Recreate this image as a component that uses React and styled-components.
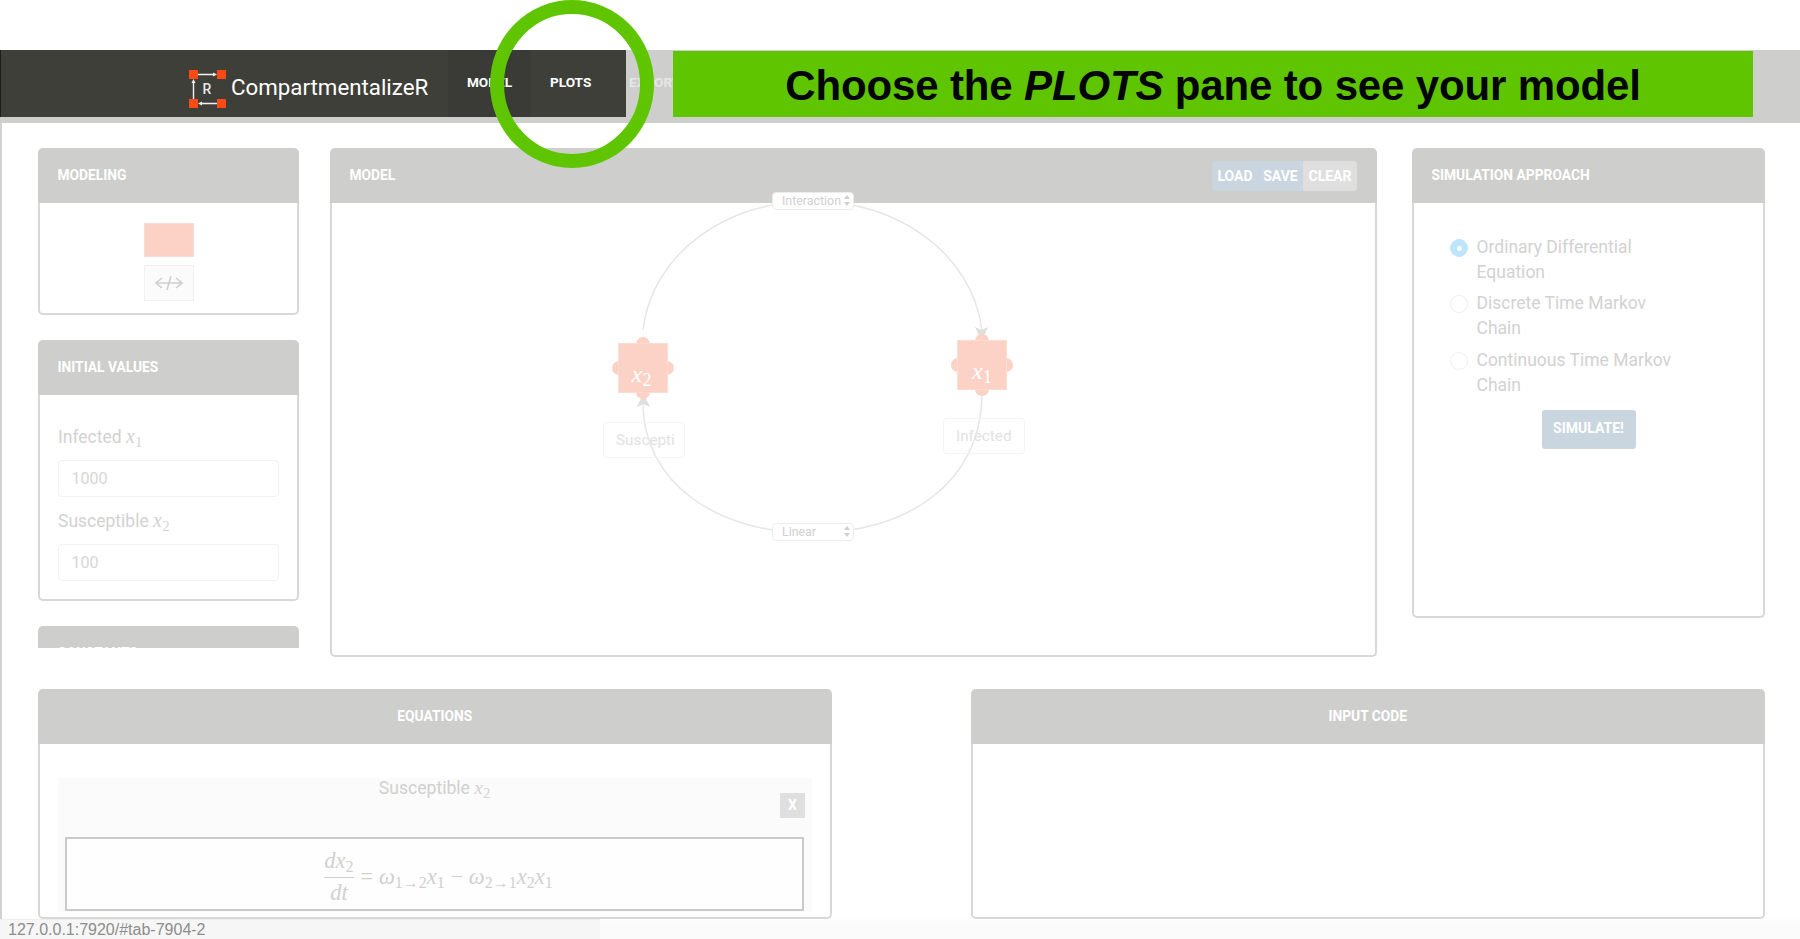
import React from "react";
import styled, { createGlobalStyle } from "styled-components";

const Global = createGlobalStyle`
  html, body { margin: 0; padding: 0; height: 100%; overflow: hidden; background: #fff; }
  body { font-family: Roboto, "Liberation Sans", sans-serif; }
  * { box-sizing: border-box; }
`;

const Page = styled.div`
  position: relative;
  width: 1800px;
  height: 939px;
  overflow: hidden;
  padding-top: 50px;
  background: linear-gradient(#fff 0, #fff 915px, #fbfbfb 925px);
`;

const NavBar = styled.header`
  display: flex;
  height: 73px;
  padding-bottom: 6px;
  background: #cececc;
`;

const Brand = styled.div`
  width: 448px;
  display: flex;
  align-items: center;
  gap: 4px;
  padding-left: 188px;
  background: #3f3f3a;
  border-left: 1px solid #1c1c1a;
`;

const BrandName = styled.span`
  color: #fff;
  font-size: 22.3px;
  line-height: 1;
  margin-top: 8px;
`;

const LogoMark = styled.svg`
  margin-top: 10px;
`;

const NavItem = styled.div`
  display: flex;
  align-items: center;
  justify-content: ${(p) => p.$justify || "flex-start"};
  width: ${(p) => p.$w}px;
  padding: ${(p) => p.$pad};
  padding-bottom: 4px;
  background: ${(p) => p.$bg};
  color: ${(p) => p.$color || "#fff"};
  font-size: 13.6px;
  font-weight: 700;
`;

const Banner = styled.div`
  position: absolute;
  left: 673px;
  top: 51px;
  width: 1080px;
  height: 66px;
  display: flex;
  align-items: center;
  justify-content: center;
  background: #5fc500;
  color: #050505;
  font-family: "Liberation Sans", Arial, sans-serif;
  font-weight: 700;
  font-size: 42px;
  letter-spacing: -0.15px;
  white-space: pre;
  padding-top: 4px;
`;

const Halo = styled.svg`
  position: absolute;
  left: 488px;
  top: 0;
  z-index: 5;
`;

const Main = styled.main`
  border-left: 2px solid #d2d2d0;
  padding: 25px 35px 0 36px;
  height: 816px;
`;

const TopRow = styled.div`
  display: flex;
  align-items: flex-start;
`;

const LeftColumn = styled.div`
  width: 261px;
  height: 500px;
  overflow: hidden;
  display: flex;
  flex-direction: column;
  gap: 25px;
  flex-shrink: 0;
`;

const Panel = styled.section`
  display: flex;
  flex-direction: column;
  flex-shrink: 0;
  width: ${(p) => p.$w}px;
  height: ${(p) => p.$h}px;
  margin-left: ${(p) => p.$ml || 0}px;
`;

const PanelHead = styled.div`
  height: 55px;
  flex-shrink: 0;
  display: flex;
  align-items: center;
  justify-content: ${(p) => (p.$center ? "center" : "space-between")};
  padding: 0 20px 2px 19.5px;
  background: #cececc;
  border-radius: 5px 5px 0 0;
  color: #fff;
  font-size: 13.8px;
  font-weight: 700;
`;

const PanelBody = styled.div`
  position: relative;
  flex: 1;
  min-height: 0;
  border: 2px solid #d8d8d6;
  border-top: none;
  border-radius: 0 0 5px 5px;
  padding: ${(p) => p.$pad || "0"};
  display: flex;
  flex-direction: column;
  overflow: ${(p) => (p.$clip ? "hidden" : "visible")};
`;

const Swatch = styled.div`
  width: 50px;
  height: 34px;
  background: #fdd2c6;
  border: 1px solid #fbdcd3;
  align-self: center;
  margin-top: 20px;
`;

const ArrowTool = styled.div`
  width: 50px;
  height: 36px;
  margin-top: 8px;
  align-self: center;
  background: #fbfbfb;
  border: 1px solid #f1f1f1;
  display: flex;
  align-items: center;
  justify-content: center;
`;

const FieldLabel = styled.div`
  height: 25px;
  color: #d2d2d2;
  font-size: 17.5px;
  line-height: 25px;
  margin-bottom: 11px;
  white-space: nowrap;
`;

const Mi = styled.i`
  font-family: "Liberation Serif", serif;
  font-size: ${(p) => p.$size || 20}px;
  color: ${(p) => p.$color || "inherit"};
  letter-spacing: 0.5px;
`;

const Sub = styled.sub`
  font-family: "Liberation Serif", serif;
  font-size: ${(p) => p.$size || 14}px;
  line-height: 0;
  vertical-align: -4px;
`;

const NumberInput = styled.input`
  display: block;
  width: 100%;
  height: 37px;
  margin-bottom: 11px;
  padding: 0 12.5px;
  border: 1px solid #f2f2f2;
  border-radius: 4px;
  background: #fff;
  color: #d6d6d6;
  font-family: Roboto, sans-serif;
  font-size: 16px;
  outline: none;
`;

const ButtonGroup = styled.div`
  display: flex;
  height: 30px;
  margin-top: 3px;
  border-radius: 4px;
  overflow: hidden;
`;

const HeadButton = styled.div`
  width: ${(p) => p.$w}px;
  display: flex;
  align-items: center;
  justify-content: center;
  background: ${(p) => p.$bg};
  color: #fff;
  font-size: 14px;
  font-weight: 700;
`;

const Canvas = styled.div`
  position: relative;
  flex: 1;
`;

const Wires = styled.svg`
  position: absolute;
  left: 0;
  top: 0;
  overflow: visible;
`;

const RateSelect = styled.div`
  position: absolute;
  left: 439.5px;
  top: ${(p) => p.$top}px;
  width: 82px;
  height: 18px;
  display: flex;
  align-items: center;
  justify-content: space-between;
  padding: 0 3px 2px 9.5px;
  background: #fff;
  border: 1px solid #ececec;
  border-radius: 4px;
  color: #d0d0d0;
  font-size: 12.4px;
`;

const Node = styled.div`
  position: absolute;
  left: ${(p) => p.$x}px;
  top: ${(p) => p.$y}px;
  width: 50px;
  height: 50px;
  background: #fdd2c6;
  border: 1px solid #fcdcd3;
  display: flex;
  justify-content: center;
  padding-top: ${(p) => p.$textTop}px;
  padding-right: ${(p) => p.$textRight}px;
  color: #fff;
  line-height: 1;
`;

const Bump = styled.span`
  position: absolute;
  width: 14px;
  height: 14px;
  border-radius: 50%;
  background: #fdd2c6;
  z-index: -1;
  ${(p) => p.$side === "top" && "top: -7px; left: 17px;"}
  ${(p) => p.$side === "bottom" && "bottom: -7px; left: 17px;"}
  ${(p) => p.$side === "left" && "left: -7px; top: 17px;"}
  ${(p) => p.$side === "right" && "right: -7px; top: 17px;"}
`;

const NodeStage = styled.div`
  position: absolute;
  inset: 0;
  z-index: 0;
  isolation: isolate;
`;

const NodeName = styled.div`
  position: absolute;
  left: ${(p) => p.$x}px;
  top: ${(p) => p.$y}px;
  width: 82px;
  height: 36px;
  padding-left: 12px;
  border: 1px solid #f4f4f4;
  border-radius: 4px;
  color: #e2e2e2;
  font-size: 15.3px;
  line-height: 34px;
  overflow: hidden;
  white-space: nowrap;
`;

const RadioGroup = styled.div`
  display: flex;
  flex-direction: column;
  gap: 6.4px;
  padding: 32px 0 0 36px;
`;

const RadioRow = styled.label`
  display: flex;
  gap: 8.5px;
  width: 230px;
  color: #d2d2d2;
  font-size: 17.5px;
  line-height: 25px;
`;

const RadioDot = styled.span`
  flex-shrink: 0;
  width: 18px;
  height: 18px;
  margin-top: 4px;
  border-radius: 50%;
  border: 1px solid ${(p) => (p.$on ? "#bfe5fd" : "#efefef")};
  background: ${(p) => (p.$on ? "#bfe5fd" : "#fff")};
  display: flex;
  align-items: center;
  justify-content: center;
  &::after {
    content: "";
    width: 5px;
    height: 5px;
    border-radius: 50%;
    background: ${(p) => (p.$on ? "#fff" : "transparent")};
  }
`;

const SimulateButton = styled.div`
  align-self: center;
  width: 94px;
  height: 39px;
  margin-top: 12px;
  border-radius: 3px;
  background: #c9d6e0;
  color: #fff;
  font-size: 14px;
  font-weight: 700;
  display: flex;
  align-items: center;
  justify-content: center;
  padding-bottom: 3px;
`;

const BottomRow = styled.div`
  display: flex;
  margin-top: 32px;
`;

const EquationCard = styled.div`
  height: 134px;
  background: #fbfbfb;
  padding: 0 8px 0 7px;
`;

const EquationTitle = styled.div`
  position: relative;
  height: 59px;
  text-align: center;
  color: #d0d0d0;
  font-size: 17.6px;
  line-height: 20px;
`;

const RemoveButton = styled.div`
  position: absolute;
  right: -1px;
  top: 15px;
  width: 25px;
  height: 25px;
  background: #dfdfdf;
  color: #fff;
  font-size: 14px;
  font-weight: 700;
  line-height: 25px;
  text-align: center;
`;

const FormulaBox = styled.div`
  height: 74px;
  padding: 6px 0 0 8px;
  border: 2px solid #cacac8;
  background: #fefefe;
  display: flex;
  align-items: center;
  justify-content: center;
  color: #d0d0d0;
  font-family: "Liberation Serif", serif;
  font-size: 22.5px;
  gap: 7px;
`;

const Fraction = styled.span`
  display: inline-flex;
  flex-direction: column;
  align-items: center;
  line-height: 1;
  i { font-family: "Liberation Serif", serif; }
`;

const FracTop = styled.span`
  padding: 0 0 4px;
  border-bottom: 1.5px solid #d0d0d0;
`;

const FracBottom = styled.span`
  padding-top: 4px;
`;

const StatusBar = styled.div`
  position: fixed;
  left: 0;
  bottom: 0;
  width: 600px;
  height: 20px;
  padding-left: 8px;
  background: #f6f6f6;
  border-top: 1px solid #efefef;
  color: #8d8d8d;
  font-family: "Liberation Sans", Arial, sans-serif;
  font-size: 16px;
  line-height: 19px;
  z-index: 6;
`;

const Logo = () => (
  <LogoMark width="38" height="38" viewBox="0 0 38 38" aria-hidden="true">
    <rect x="0" y="0" width="9" height="9" fill="#fb4a14" />
    <rect x="28" y="0" width="9" height="9" fill="#fb4a14" />
    <rect x="0" y="29" width="9" height="9" fill="#fb4a14" />
    <rect x="28" y="29" width="9" height="9" fill="#fb4a14" />
    <path d="M9 4.5H25M4.5 29V12M28 33.5H12" stroke="#f1f1f1" strokeWidth="1.4" fill="none" />
    <path d="M28 4.5L24 2.5V6.5ZM4.5 9L2.5 13H6.5ZM9 33.5L13 31.5V35.5Z" fill="#f1f1f1" />
    <text x="18" y="23.5" textAnchor="middle" fontFamily="Roboto, sans-serif" fontWeight="500" fontSize="14" fill="#e6e6e6">R</text>
  </LogoMark>
);

const Caret = () => (
  <svg width="6" height="11" viewBox="0 0 6 11" aria-hidden="true">
    <path d="M3 0L6 4H0ZM3 11L0 7H6Z" fill="#cfcfcf" />
  </svg>
);

const Bumps = () => (
  <>
    <Bump $side="top" />
    <Bump $side="bottom" />
    <Bump $side="left" />
    <Bump $side="right" />
  </>
);

export default function App() {
  return (
    <Page>
      <Global />
      <NavBar>
        <Brand>
          <Logo />
          <BrandName>CompartmentalizeR</BrandName>
        </Brand>
        <NavItem $w={83} $justify="center" $pad="0" $bg="#3a3a36">MODEL</NavItem>
        <NavItem $w={95} $pad="0 0 0 19px" $bg="#3f3f3a">PLOTS</NavItem>
        <NavItem $w={47} $pad="0 0 0 3px" $color="#e6e6e6">EXPORT</NavItem>
      </NavBar>
      <Banner>
        Choose the <i>PLOTS</i> pane to see your model
      </Banner>
      <Halo width="168" height="170" viewBox="0 0 168 170" aria-hidden="true">
        <ellipse cx="84" cy="84" rx="75" ry="77" fill="none" stroke="#5fc500" strokeWidth="14" />
      </Halo>
      <Main>
        <TopRow>
          <LeftColumn>
            <Panel $w={261} $h={167}>
              <PanelHead>MODELING</PanelHead>
              <PanelBody>
                <Swatch />
                <ArrowTool>
                  <svg width="28" height="16" viewBox="0 0 28 16" aria-hidden="true">
                    <path d="M1 8H27M7 3L1 8L7 13M21 3L27 8L21 13M16 1L12 15" stroke="#cfcfcf" strokeWidth="1.6" fill="none" />
                  </svg>
                </ArrowTool>
              </PanelBody>
            </Panel>
            <Panel $w={261} $h={261}>
              <PanelHead>INITIAL VALUES</PanelHead>
              <PanelBody $pad="29px 18px 0">
                <FieldLabel>Infected <Mi>x</Mi><Sub>1</Sub></FieldLabel>
                <NumberInput readOnly value="1000" />
                <FieldLabel>Susceptible <Mi>x</Mi><Sub>2</Sub></FieldLabel>
                <NumberInput readOnly value="100" />
              </PanelBody>
            </Panel>
            <Panel $w={261} $h={200}>
              <PanelHead>CONSTANTS</PanelHead>
              <PanelBody />
            </Panel>
          </LeftColumn>

          <Panel $w={1047} $h={509} $ml={31}>
            <PanelHead>
              MODEL
              <ButtonGroup>
                <HeadButton $w={46} $bg="#c9d6e0">LOAD</HeadButton>
                <HeadButton $w={45} $bg="#c9d6e0">SAVE</HeadButton>
                <HeadButton $w={54} $bg="#dfdfdf">CLEAR</HeadButton>
              </ButtonGroup>
            </PanelHead>
            <PanelBody>
              <Canvas>
                <Wires width="1043" height="452" viewBox="0 0 1043 452" aria-hidden="true">
                  <path
                    d="M311 127C320 50 395 -2 480 -2C565 -2 640 50 650 127M650 190C650 280 575 330 480 330C385 330 311 280 311 200"
                    fill="none"
                    stroke="#e6e6e6"
                    strokeWidth="1.5"
                  />
                  <path d="M649.5 138L643 124L649.5 127L656 124Z" fill="#dedede" />
                  <path d="M311.5 190L305 204L311.5 201L318 204Z" fill="#dedede" />
                </Wires>
                <NodeStage>
                  <Node $x={286} $y={140} $textTop={18} $textRight={3}>
                    <Bumps />
                    <span><Mi $size={24}>x</Mi><Sub $size={18}>2</Sub></span>
                  </Node>
                  <Node $x={625} $y={137} $textTop={18} $textRight={0}>
                    <Bumps />
                    <span><Mi $size={24}>x</Mi><Sub $size={18}>1</Sub></span>
                  </Node>
                </NodeStage>
                <NodeName $x={271} $y={219}>Suscepti</NodeName>
                <NodeName $x={611} $y={215}>Infected</NodeName>
                <RateSelect $top={-11}>Interaction<Caret /></RateSelect>
                <RateSelect $top={320}>Linear<Caret /></RateSelect>
              </Canvas>
            </PanelBody>
          </Panel>

          <Panel $w={353} $h={470} $ml={35}>
            <PanelHead>SIMULATION APPROACH</PanelHead>
            <PanelBody>
              <RadioGroup>
                <RadioRow><RadioDot $on /><span>Ordinary Differential Equation</span></RadioRow>
                <RadioRow><RadioDot /><span>Discrete Time Markov Chain</span></RadioRow>
                <RadioRow><RadioDot /><span>Continuous Time Markov Chain</span></RadioRow>
              </RadioGroup>
              <SimulateButton>SIMULATE!</SimulateButton>
            </PanelBody>
          </Panel>
        </TopRow>

        <BottomRow>
          <Panel $w={794} $h={230}>
            <PanelHead $center>EQUATIONS</PanelHead>
            <PanelBody $pad="34px 18px 0" $clip>
              <EquationCard>
                <EquationTitle>
                  Susceptible <Mi $size={19}>x</Mi><Sub>2</Sub>
                  <RemoveButton>X</RemoveButton>
                </EquationTitle>
                <FormulaBox>
                  <Fraction>
                    <FracTop><i>dx</i><Sub $size={16}>2</Sub></FracTop>
                    <FracBottom><i>dt</i></FracBottom>
                  </Fraction>
                  <span>
                    = <i>ω</i><Sub $size={16}>1→2</Sub><i>x</i><Sub $size={16}>1</Sub> − <i>ω</i><Sub $size={16}>2→1</Sub><i>x</i><Sub $size={16}>2</Sub><i>x</i><Sub $size={16}>1</Sub>
                  </span>
                </FormulaBox>
              </EquationCard>
            </PanelBody>
          </Panel>
          <Panel $w={794} $h={230} $ml={139}>
            <PanelHead $center>INPUT CODE</PanelHead>
            <PanelBody />
          </Panel>
        </BottomRow>
      </Main>
      <StatusBar>127.0.0.1:7920/#tab-7904-2</StatusBar>
    </Page>
  );
}
